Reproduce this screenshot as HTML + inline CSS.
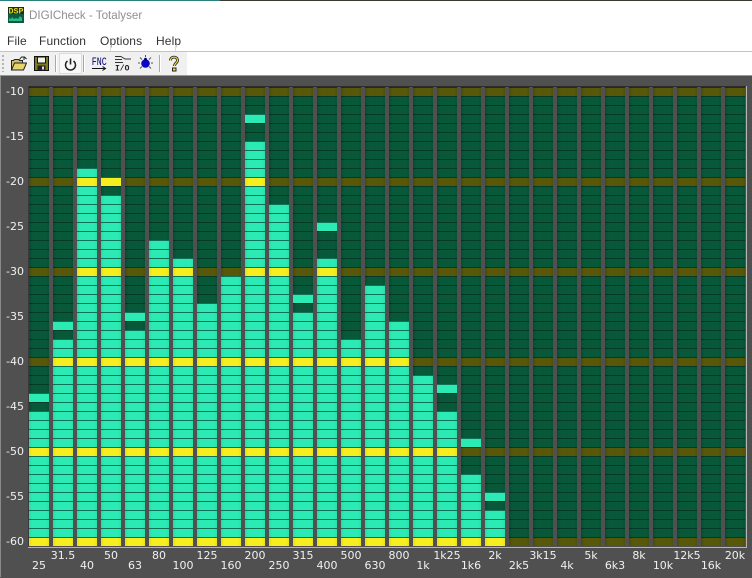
<!DOCTYPE html>
<html><head><meta charset="utf-8"><title>DIGICheck - Totalyser</title>
<style>
html,body{margin:0;padding:0;width:752px;height:577px;overflow:hidden;background:#fff;font-family:"Liberation Sans",sans-serif}
.a{position:absolute}
#top{left:0;top:0;width:752px;height:1px;background:linear-gradient(90deg,#2a8080 0 220px,#3a3a30 220px)}
#title{left:29px;top:9px;font-size:11.6px;color:#8f8f8f;white-space:nowrap}
.m{position:absolute;top:34px;font-size:12px;color:#333;letter-spacing:.12px;white-space:nowrap}
.vl{position:absolute;top:45px;width:1px;height:6px;background:#ddd}
#tb{left:0;top:51px;width:187px;height:23px;background:#f0f0f0;border-top:1px solid #c4c4c4}
#tbline{left:187px;top:51px;width:565px;height:1px;background:#c4c4c4}
#grip{left:2px;top:55px;width:2px;height:17px;background:repeating-linear-gradient(#b4b4b4 0 2px,transparent 2px 4px)}
.sep{position:absolute;top:55px;width:1px;height:17px;background:#a8a8a8;border-right:1px solid #fff}
#pw{left:59px;top:53px;width:21px;height:19px;background:#f8f8f8;border:1px solid #dcdcdc}
#chart{left:0;top:75px;width:752px;height:502px;background:#505050;border-top:1px solid #999}
#edgeL{left:0;top:76px;width:1px;height:501px;background:#8a8a8a}
#frameT{left:28px;top:86px;width:718px;height:1px;background:#2c2c2c}
#frameL{left:28px;top:86px;width:1px;height:461px;background:#3a3a3a}
#frameR{left:746px;top:86px;width:1px;height:462px;background:#b4b4b4}
#frameB{left:28px;top:547px;width:719px;height:1px;background:#b4b4b4}
.c{position:absolute;top:87px;width:20px;height:459px;background:
 linear-gradient(90deg,rgba(0,0,0,.14),transparent 4px,transparent 17px,rgba(0,0,0,.08)),
 repeating-linear-gradient(to top,transparent 0 8px,#053a26 8px 9px),
 repeating-linear-gradient(to top,#58580a 0 9px,#08583a 9px 90px)}
.s,.p,.y{position:absolute;left:0;width:20px}
.s{bottom:0;background:
 linear-gradient(90deg,rgba(0,0,0,.08),transparent 3px,transparent 17px,rgba(0,0,0,.05)),
 repeating-linear-gradient(to top,transparent 0 8px,#0d7256 8px 9px),
 repeating-linear-gradient(to top,#f6ee1e 0 9px,#2ceab4 9px 90px)}
.p{height:9px;background:linear-gradient(#0d7256 0 1px,#2ceab4 1px)}
.y{height:9px;background:linear-gradient(#4e5a10 0 1px,#f6ee1e 1px)}
.t{position:absolute;font:11px "DejaVu Sans",sans-serif;color:#f0f0f0;white-space:nowrap;line-height:12px}
.d{left:0;width:24px;text-align:right}
.f{width:40px;text-align:center}
.u{top:550px}.v{top:560px}
</style></head><body>
<div class="a" id="top"></div>
<svg class="a" style="left:8px;top:7px" width="16" height="16" viewBox="0 0 16 16"><rect width="16" height="16" fill="#0f5a3c"/><rect width="16" height="7" fill="#123020"/><text x="0.500" y="6.500" font-family="Liberation Mono,monospace" font-size="8" font-weight="bold" fill="#e8d820" textLength="15" lengthAdjust="spacingAndGlyphs">DSP</text><path d="M1 14V11l2 1 1-2 2 2 2-1 2 1 2-3 2 2v3z" fill="#2cb888"/></svg>
<div class="a" id="title">DIGICheck - Totalyser</div>
<div class="m" style="left:7px">File</div>
<div class="m" style="left:39px">Function</div>
<div class="m" style="left:100px">Options</div>
<div class="m" style="left:156px">Help</div>
<div class="vl" style="left:110px"></div><div class="vl" style="left:175px"></div>
<div class="a" id="tb"></div><div class="a" id="tbline"></div><div class="a" id="grip"></div>
<div class="sep" style="left:55px"></div><div class="sep" style="left:83px"></div><div class="sep" style="left:159px"></div>
<div class="a" id="pw"></div>
<svg class="a" style="left:10px;top:56px" width="17" height="15" viewBox="0 0 17 15"><path d="M1.500 14V4.500h2l1-1h4l1 1h3v2.500" fill="#cfc070" stroke="#222"/><path d="M1.500 14l3-7h12l-3 7z" fill="#e6d56c" stroke="#222"/><path d="M9.500 3.500l2-2.500h3l2 2M14 1v3" fill="none" stroke="#222"/></svg>
<svg class="a" style="left:34px;top:56px" width="15" height="15" viewBox="0 0 15 15"><path d="M.5.500h14v14H.5z" fill="#7e7a24" stroke="#111"/><rect x="3.500" y="1" width="8" height="6" fill="#f2f2e6" stroke="#111"/><rect x="3.500" y="9.500" width="8" height="5" fill="#222"/><rect x="8" y="10.500" width="2" height="3" fill="#ddd"/></svg>
<svg class="a" style="left:64px;top:58px" width="13" height="13" viewBox="0 0 13 13"><path d="M3.500 3A5 5 0 1 0 9.500 3" fill="none" stroke="#222" stroke-width="1.500"/><path d="M6.500 .5V6.500" stroke="#222" stroke-width="1.600"/></svg>
<svg class="a" style="left:91px;top:55px" width="17" height="18" viewBox="0 0 17 18"><text x="0.800" y="9.800" font-family="Liberation Mono,monospace" font-size="11" fill="#000070" textLength="15" lengthAdjust="spacingAndGlyphs">FNC</text><path d="M1 13.500H14M11.500 11.500l3 2-3 2" fill="none" stroke="#111"/></svg>
<svg class="a" style="left:114px;top:55px" width="18" height="17" viewBox="0 0 18 17"><path d="M1 1.500H7M1 4.500H8M1 7.500H9M7 1.500l4 2.500h6" fill="none" stroke="#333"/><text x="1" y="15.500" font-family="Liberation Mono,monospace" font-size="8" font-weight="bold" fill="#222">I/O</text></svg>
<svg class="a" style="left:137px;top:55px" width="17" height="16" viewBox="0 0 17 16"><circle cx="8.500" cy="8.500" r="4.300" fill="#0808c8"/><circle cx="8.500" cy="4.200" r="1.400" fill="#000060"/><path d="M8.500 0v2M1 8h2M14 8h2M3 2.500l2 2M14 2.500l-2 2M3 13.500l2-2M14 13.500l-2-2" stroke="#555"/></svg>
<svg class="a" style="left:167px;top:55px" width="14" height="17" viewBox="0 0 14 17"><path d="M3.500 5.500C3.500 1 10.500 1 10.500 5.500 10.500 8 7.500 8 7.500 11" fill="none" stroke="#222" stroke-width="2.800"/><path d="M3.500 5.500C3.500 1 10.500 1 10.500 5.500 10.500 8 7.500 8 7.500 11" fill="none" stroke="#f0e040" stroke-width="1.200"/><rect x="5.500" y="13" width="3.500" height="3" fill="#f0e040" stroke="#222"/></svg>
<div class="a" id="chart"></div><div class="a" id="edgeL"></div>
<div class="a" id="frameT"></div><div class="a" id="frameL"></div><div class="a" id="frameR"></div><div class="a" id="frameB"></div>
<div class="c" style="left:29px"><div class="p" style="top:306px"></div><div class="s" style="height:135px"></div></div>
<div class="c" style="left:53px"><div class="p" style="top:234px"></div><div class="s" style="height:207px"></div></div>
<div class="c" style="left:77px"><div class="s" style="height:378px"></div></div>
<div class="c" style="left:101px"><div class="y" style="top:90px"></div><div class="s" style="height:351px"></div></div>
<div class="c" style="left:125px"><div class="p" style="top:225px"></div><div class="s" style="height:216px"></div></div>
<div class="c" style="left:149px"><div class="s" style="height:306px"></div></div>
<div class="c" style="left:173px"><div class="s" style="height:288px"></div></div>
<div class="c" style="left:197px"><div class="s" style="height:243px"></div></div>
<div class="c" style="left:221px"><div class="s" style="height:270px"></div></div>
<div class="c" style="left:245px"><div class="p" style="top:27px"></div><div class="s" style="height:405px"></div></div>
<div class="c" style="left:269px"><div class="s" style="height:342px"></div></div>
<div class="c" style="left:293px"><div class="p" style="top:207px"></div><div class="s" style="height:234px"></div></div>
<div class="c" style="left:317px"><div class="p" style="top:135px"></div><div class="s" style="height:288px"></div></div>
<div class="c" style="left:341px"><div class="s" style="height:207px"></div></div>
<div class="c" style="left:365px"><div class="s" style="height:261px"></div></div>
<div class="c" style="left:389px"><div class="s" style="height:225px"></div></div>
<div class="c" style="left:413px"><div class="s" style="height:171px"></div></div>
<div class="c" style="left:437px"><div class="p" style="top:297px"></div><div class="s" style="height:135px"></div></div>
<div class="c" style="left:461px"><div class="p" style="top:351px"></div><div class="s" style="height:72px"></div></div>
<div class="c" style="left:485px"><div class="p" style="top:405px"></div><div class="s" style="height:36px"></div></div>
<div class="c" style="left:509px"></div><div class="c" style="left:533px"></div><div class="c" style="left:557px"></div><div class="c" style="left:581px"></div><div class="c" style="left:605px"></div><div class="c" style="left:629px"></div><div class="c" style="left:653px"></div><div class="c" style="left:677px"></div><div class="c" style="left:701px"></div><div class="c" style="left:725px"></div>
<div class="t d" style="top:86px">-10</div><div class="t d" style="top:131px">-15</div><div class="t d" style="top:176px">-20</div><div class="t d" style="top:221px">-25</div><div class="t d" style="top:266px">-30</div><div class="t d" style="top:311px">-35</div><div class="t d" style="top:356px">-40</div><div class="t d" style="top:401px">-45</div><div class="t d" style="top:446px">-50</div><div class="t d" style="top:491px">-55</div><div class="t d" style="top:536px">-60</div>
<div class="t f v" style="left:19px">25</div><div class="t f u" style="left:43px">31.5</div><div class="t f v" style="left:67px">40</div><div class="t f u" style="left:91px">50</div><div class="t f v" style="left:115px">63</div><div class="t f u" style="left:139px">80</div><div class="t f v" style="left:163px">100</div><div class="t f u" style="left:187px">125</div><div class="t f v" style="left:211px">160</div><div class="t f u" style="left:235px">200</div><div class="t f v" style="left:259px">250</div><div class="t f u" style="left:283px">315</div><div class="t f v" style="left:307px">400</div><div class="t f u" style="left:331px">500</div><div class="t f v" style="left:355px">630</div><div class="t f u" style="left:379px">800</div><div class="t f v" style="left:403px">1k</div><div class="t f u" style="left:427px">1k25</div><div class="t f v" style="left:451px">1k6</div><div class="t f u" style="left:475px">2k</div><div class="t f v" style="left:499px">2k5</div><div class="t f u" style="left:523px">3k15</div><div class="t f v" style="left:547px">4k</div><div class="t f u" style="left:571px">5k</div><div class="t f v" style="left:595px">6k3</div><div class="t f u" style="left:619px">8k</div><div class="t f v" style="left:643px">10k</div><div class="t f u" style="left:667px">12k5</div><div class="t f v" style="left:691px">16k</div><div class="t f u" style="left:715px">20k</div>
</body></html>
